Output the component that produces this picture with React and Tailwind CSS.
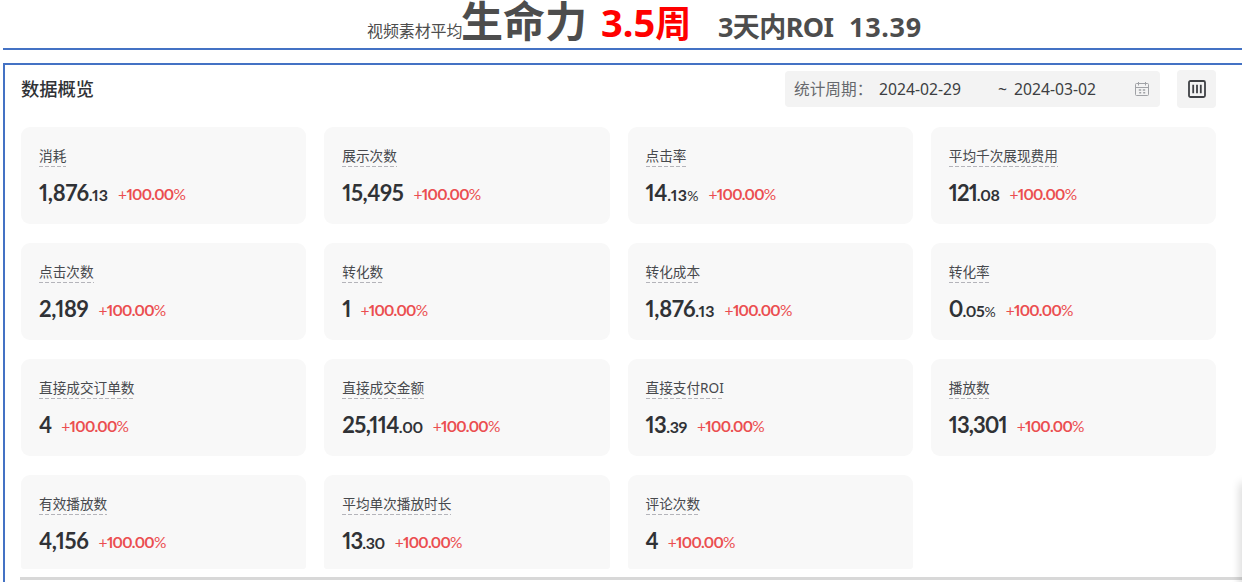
import clsx from 'clsx'

const METRICS = [
  { label: '消耗', int: '1,876', dec: '.13', tracking: 'tracking-[-0.2px]', decTracking: 'tracking-[0.1px]' },
  { label: '展示次数', int: '15,495', tracking: 'tracking-[-0.4px]' },
  { label: '点击率', int: '14', dec: '.13', unit: '%', tracking: 'tracking-[-0.3px]', decTracking: 'tracking-[0.4px]' },
  { label: '平均千次展现费用', int: '121', dec: '.08' },
  { label: '点击次数', int: '2,189', tracking: 'tracking-[-0.3px]' },
  { label: '转化数', int: '1' },
  { label: '转化成本', int: '1,876', dec: '.13', tracking: 'tracking-[-0.2px]', decTracking: 'tracking-[0.1px]' },
  { label: '转化率', int: '0', dec: '.05', unit: '%' },
  { label: '直接成交订单数', int: '4' },
  { label: '直接成交金额', int: '25,114', dec: '.00', tracking: 'tracking-[-0.6px]' },
  { label: '直接支付ROI', int: '13', dec: '.39', tracking: 'tracking-[-0.5px]' },
  { label: '播放数', int: '13,301' },
  { label: '有效播放数', int: '4,156', tracking: 'tracking-[-0.3px]' },
  { label: '平均单次播放时长', int: '13', dec: '.30' },
  { label: '评论次数', int: '4' },
]

function CalendarIcon() {
  return (
    <svg className="h-4 w-4 shrink-0 text-[#a0a2a6]" viewBox="0 0 16 16" fill="none" stroke="currentColor">
      <rect x="1.5" y="2.5" width="13" height="12" rx="1" />
      <path d="M1.5 6.5h13M4.5 1v3.5M11.5 1v3.5" />
      <path d="M4.8 9h2.4M8.8 9h2.4M5.2 11.8h2M9.2 11.8h2" strokeWidth="1.4" />
    </svg>
  )
}

function ColumnsIcon() {
  return (
    <svg className="h-[18px] w-[18px]" viewBox="0 0 18 18" fill="none" stroke="#3f4145">
      <rect x="1" y="1" width="16" height="16" rx="1.5" strokeWidth="1.8" />
      <path d="M5.2 4.8v8.4M9 4.8v8.4M12.8 4.8v8.4" strokeWidth="1.8" />
    </svg>
  )
}

function MetricCard({ metric, clipped }) {
  return (
    <div
      className={clsx(
        'bg-[#f8f8f8] px-[18px] pt-[19px]',
        clipped ? 'h-[94px] rounded-t-[9px] rounded-b-[3px]' : 'h-[97px] rounded-[9px]'
      )}
    >
      <div className="flex">
        <span className="flex h-[21px] flex-col text-[13.65px] leading-5 whitespace-nowrap text-[#47494d]">
          {metric.label}
          <span className="h-px w-full shrink-0 bg-[repeating-linear-gradient(90deg,#b4b4ba_0_4px,transparent_4px_6px)]" />
        </span>
      </div>
      <div className="mt-[10px] flex items-baseline font-['Lato','Noto_Sans_CJK_SC',sans-serif] leading-8 font-bold whitespace-nowrap text-[#303236]">
        <span className={clsx('text-[22px] proportional-nums', metric.tracking || 'tracking-[-0.9px]')}>{metric.int}</span>
        {metric.dec && (
          <span className={clsx('text-[16px] proportional-nums', metric.decTracking || 'tracking-[-0.4px]')}>
            {metric.dec}
          </span>
        )}
        {metric.unit && <span className="text-[14px] font-normal">{metric.unit}</span>}
        <span className="ml-[10px] -translate-y-px text-[15.5px] tracking-[-0.7px] text-[#eb4e50] proportional-nums">
          <span className="font-normal">+</span>100.00<span className="font-normal">%</span>
        </span>
      </div>
    </div>
  )
}

export default function App() {
  return (
    <div className="relative flex h-[582px] w-[1242px] flex-col overflow-hidden bg-white pl-[3px] font-['Noto_Sans','Noto_Sans_CJK_SC',sans-serif]">
      {/* Headline */}
      <header className="flex h-[50px] shrink-0 items-baseline border-b-2 border-[#4472c4] pl-[364px] leading-[38px] font-bold whitespace-nowrap text-[#4d4d4d]">
        <span className="w-[94px] text-[16px] font-normal tracking-[-0.1px]">视频素材平均</span>
        <span className="w-[140px] font-['Noto_Sans_CJK_SC',sans-serif] text-[42px]">生命力</span>
        <span className="w-[117px] text-[36px] text-[#ff0000]">
          <span className="text-[38px]">3.5</span>周
        </span>
        <span className="w-[131px] text-[27px] tracking-[-0.6px]">3天内ROI</span>
        <span className="text-[27px] tracking-[0.7px]">13.39</span>
      </header>

      {/* Overview panel */}
      <section className="mt-[13px] flex flex-1 flex-col border-t-2 border-l-2 border-[#4472c4] pl-4">
        <div className="flex h-[62px] items-start pt-[5px] pr-[26px]">
          <h2 className="text-[18.3px] leading-[38px] font-medium text-[#303236]">数据概览</h2>
          <div className="mt-px ml-auto flex h-9 w-[375px] items-center rounded-[4px] bg-[#f3f3f3] pl-[9px] text-[15.7px] whitespace-nowrap text-[#3c3e42]">
            <span className="w-[85px] pt-0.5 text-[#66686c]">统计周期：</span>
            <span className="w-[119px] pt-0.5">2024-02-29</span>
            <span className="w-4 pt-0.5">~</span>
            <span className="w-[120px] pt-0.5">2024-03-02</span>
            <CalendarIcon />
          </div>
          <button className="ml-[17px] flex h-[38px] w-[39px] items-center justify-center rounded-[4px] bg-[#f3f3f3]">
            <ColumnsIcon />
          </button>
        </div>

        <div className="grid w-[1195px] grid-cols-4 gap-x-[18px] gap-y-[19px]">
          {METRICS.map((metric, i) => (
            <MetricCard key={metric.label} metric={metric} clipped={i >= 12} />
          ))}
        </div>
        <div className="mt-2 -ml-px h-[3px] shrink-0 bg-[#d8d8d8]" />
      </section>

      {/* Floating drawer edge */}
      <div className="absolute top-[484px] -right-1 h-[120px] w-1 shadow-[0_0_10px_1px_rgba(0,0,0,0.22)]" />
    </div>
  )
}
